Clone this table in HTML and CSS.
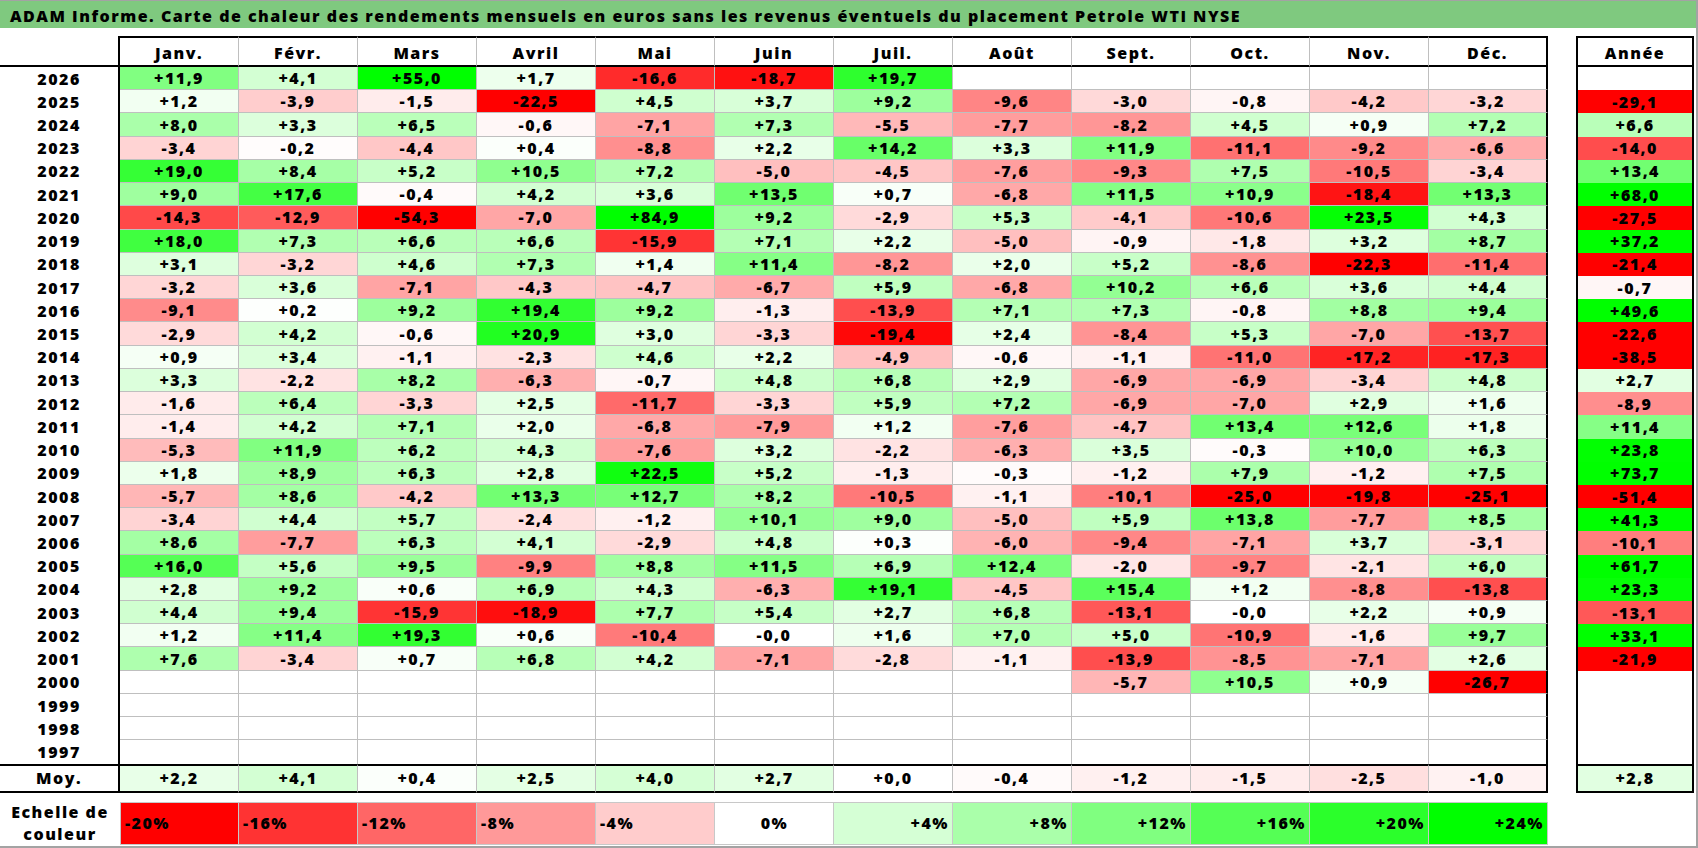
FILE: index.html
```html
<!DOCTYPE html>
<html lang="fr">
<head>
<meta charset="utf-8">
<title>ADAM Informe - Carte de chaleur Petrole WTI NYSE</title>
<link rel="stylesheet" href="styles.css">
</head>
<body>
<div class="frame">
  <div class="title">ADAM Informe. Carte de chaleur des rendements mensuels en euros sans les revenus éventuels du placement Petrole WTI NYSE</div>
  <div class="sheet">
    <div class="row head"><div class="lab"></div><div class="c">Janv.</div><div class="c">Févr.</div><div class="c">Mars</div><div class="c">Avril</div><div class="c">Mai</div><div class="c">Juin</div><div class="c">Juil.</div><div class="c">Août</div><div class="c">Sept.</div><div class="c">Oct.</div><div class="c">Nov.</div><div class="c">Déc.</div><div class="yr">Année</div></div>
    <div class="row"><div class="lab">2026</div><div class="c p" style="--c:129">+11,9</div><div class="c p" style="--c:211">+4,1</div><div class="c p" style="--c:0">+55,0</div><div class="c p" style="--c:237">+1,7</div><div class="c n" style="--c:43">-16,6</div><div class="c n" style="--c:17">-18,7</div><div class="c p" style="--c:46">+19,7</div><div class="c"></div><div class="c"></div><div class="c"></div><div class="c"></div><div class="c"></div><div class="yr"></div></div>
    <div class="row"><div class="lab">2025</div><div class="c p" style="--c:242">+1,2</div><div class="c n" style="--c:205">-3,9</div><div class="c n" style="--c:236">-1,5</div><div class="c n" style="--c:0">-22,5</div><div class="c p" style="--c:207">+4,5</div><div class="c p" style="--c:216">+3,7</div><div class="c p" style="--c:157">+9,2</div><div class="c n" style="--c:133">-9,6</div><div class="c n" style="--c:217">-3,0</div><div class="c n" style="--c:245">-0,8</div><div class="c n" style="--c:201">-4,2</div><div class="c n" style="--c:214">-3,2</div><div class="yr n" style="--c:0">-29,1</div></div>
    <div class="row"><div class="lab">2024</div><div class="c p" style="--c:170">+8,0</div><div class="c p" style="--c:220">+3,3</div><div class="c p" style="--c:186">+6,5</div><div class="c n" style="--c:247">-0,6</div><div class="c n" style="--c:164">-7,1</div><div class="c p" style="--c:177">+7,3</div><div class="c n" style="--c:185">-5,5</div><div class="c n" style="--c:157">-7,7</div><div class="c n" style="--c:150">-8,2</div><div class="c p" style="--c:207">+4,5</div><div class="c p" style="--c:245">+0,9</div><div class="c p" style="--c:179">+7,2</div><div class="yr p" style="--c:185">+6,6</div></div>
    <div class="row"><div class="lab">2023</div><div class="c n" style="--c:212">-3,4</div><div class="c n" style="--c:252">-0,2</div><div class="c n" style="--c:199">-4,4</div><div class="c p" style="--c:251">+0,4</div><div class="c n" style="--c:143">-8,8</div><div class="c p" style="--c:232">+2,2</div><div class="c p" style="--c:104">+14,2</div><div class="c p" style="--c:220">+3,3</div><div class="c p" style="--c:129">+11,9</div><div class="c n" style="--c:113">-11,1</div><div class="c n" style="--c:138">-9,2</div><div class="c n" style="--c:171">-6,6</div><div class="yr n" style="--c:77">-14,0</div></div>
    <div class="row"><div class="lab">2022</div><div class="c p" style="--c:53">+19,0</div><div class="c p" style="--c:166">+8,4</div><div class="c p" style="--c:200">+5,2</div><div class="c p" style="--c:143">+10,5</div><div class="c p" style="--c:179">+7,2</div><div class="c n" style="--c:191">-5,0</div><div class="c n" style="--c:198">-4,5</div><div class="c n" style="--c:158">-7,6</div><div class="c n" style="--c:136">-9,3</div><div class="c p" style="--c:175">+7,5</div><div class="c n" style="--c:121">-10,5</div><div class="c n" style="--c:212">-3,4</div><div class="yr p" style="--c:113">+13,4</div></div>
    <div class="row"><div class="lab">2021</div><div class="c p" style="--c:159">+9,0</div><div class="c p" style="--c:68">+17,6</div><div class="c n" style="--c:250">-0,4</div><div class="c p" style="--c:210">+4,2</div><div class="c p" style="--c:217">+3,6</div><div class="c p" style="--c:112">+13,5</div><div class="c p" style="--c:248">+0,7</div><div class="c n" style="--c:168">-6,8</div><div class="c p" style="--c:133">+11,5</div><div class="c p" style="--c:139">+10,9</div><div class="c n" style="--c:20">-18,4</div><div class="c p" style="--c:114">+13,3</div><div class="yr p" style="--c:0">+68,0</div></div>
    <div class="row"><div class="lab">2020</div><div class="c n" style="--c:73">-14,3</div><div class="c n" style="--c:91">-12,9</div><div class="c n" style="--c:0">-54,3</div><div class="c n" style="--c:166">-7,0</div><div class="c p" style="--c:0">+84,9</div><div class="c p" style="--c:157">+9,2</div><div class="c n" style="--c:218">-2,9</div><div class="c p" style="--c:199">+5,3</div><div class="c n" style="--c:203">-4,1</div><div class="c n" style="--c:120">-10,6</div><div class="c p" style="--c:5">+23,5</div><div class="c p" style="--c:209">+4,3</div><div class="yr n" style="--c:0">-27,5</div></div>
    <div class="row"><div class="lab">2019</div><div class="c p" style="--c:64">+18,0</div><div class="c p" style="--c:177">+7,3</div><div class="c p" style="--c:185">+6,6</div><div class="c p" style="--c:185">+6,6</div><div class="c n" style="--c:52">-15,9</div><div class="c p" style="--c:180">+7,1</div><div class="c p" style="--c:232">+2,2</div><div class="c n" style="--c:191">-5,0</div><div class="c n" style="--c:244">-0,9</div><div class="c n" style="--c:232">-1,8</div><div class="c p" style="--c:221">+3,2</div><div class="c p" style="--c:163">+8,7</div><div class="yr p" style="--c:0">+37,2</div></div>
    <div class="row"><div class="lab">2018</div><div class="c p" style="--c:222">+3,1</div><div class="c n" style="--c:214">-3,2</div><div class="c p" style="--c:206">+4,6</div><div class="c p" style="--c:177">+7,3</div><div class="c p" style="--c:240">+1,4</div><div class="c p" style="--c:134">+11,4</div><div class="c n" style="--c:150">-8,2</div><div class="c p" style="--c:234">+2,0</div><div class="c p" style="--c:200">+5,2</div><div class="c n" style="--c:145">-8,6</div><div class="c n" style="--c:0">-22,3</div><div class="c n" style="--c:110">-11,4</div><div class="yr n" style="--c:0">-21,4</div></div>
    <div class="row"><div class="lab">2017</div><div class="c n" style="--c:214">-3,2</div><div class="c p" style="--c:217">+3,6</div><div class="c n" style="--c:164">-7,1</div><div class="c n" style="--c:200">-4,3</div><div class="c n" style="--c:195">-4,7</div><div class="c n" style="--c:170">-6,7</div><div class="c p" style="--c:192">+5,9</div><div class="c n" style="--c:168">-6,8</div><div class="c p" style="--c:147">+10,2</div><div class="c p" style="--c:185">+6,6</div><div class="c p" style="--c:217">+3,6</div><div class="c p" style="--c:208">+4,4</div><div class="yr n" style="--c:246">-0,7</div></div>
    <div class="row"><div class="lab">2016</div><div class="c n" style="--c:139">-9,1</div><div class="c p" style="--c:253">+0,2</div><div class="c p" style="--c:157">+9,2</div><div class="c p" style="--c:49">+19,4</div><div class="c p" style="--c:157">+9,2</div><div class="c n" style="--c:238">-1,3</div><div class="c n" style="--c:78">-13,9</div><div class="c p" style="--c:180">+7,1</div><div class="c p" style="--c:177">+7,3</div><div class="c n" style="--c:245">-0,8</div><div class="c p" style="--c:162">+8,8</div><div class="c p" style="--c:155">+9,4</div><div class="yr p" style="--c:0">+49,6</div></div>
    <div class="row"><div class="lab">2015</div><div class="c n" style="--c:218">-2,9</div><div class="c p" style="--c:210">+4,2</div><div class="c n" style="--c:247">-0,6</div><div class="c p" style="--c:33">+20,9</div><div class="c p" style="--c:223">+3,0</div><div class="c n" style="--c:213">-3,3</div><div class="c n" style="--c:8">-19,4</div><div class="c p" style="--c:230">+2,4</div><div class="c n" style="--c:148">-8,4</div><div class="c p" style="--c:199">+5,3</div><div class="c n" style="--c:166">-7,0</div><div class="c n" style="--c:80">-13,7</div><div class="yr n" style="--c:0">-22,6</div></div>
    <div class="row"><div class="lab">2014</div><div class="c p" style="--c:245">+0,9</div><div class="c p" style="--c:219">+3,4</div><div class="c n" style="--c:241">-1,1</div><div class="c n" style="--c:226">-2,3</div><div class="c p" style="--c:206">+4,6</div><div class="c p" style="--c:232">+2,2</div><div class="c n" style="--c:193">-4,9</div><div class="c n" style="--c:247">-0,6</div><div class="c n" style="--c:241">-1,1</div><div class="c n" style="--c:115">-11,0</div><div class="c n" style="--c:36">-17,2</div><div class="c n" style="--c:34">-17,3</div><div class="yr n" style="--c:0">-38,5</div></div>
    <div class="row"><div class="lab">2013</div><div class="c p" style="--c:220">+3,3</div><div class="c n" style="--c:227">-2,2</div><div class="c p" style="--c:168">+8,2</div><div class="c n" style="--c:175">-6,3</div><div class="c n" style="--c:246">-0,7</div><div class="c p" style="--c:204">+4,8</div><div class="c p" style="--c:183">+6,8</div><div class="c p" style="--c:224">+2,9</div><div class="c n" style="--c:167">-6,9</div><div class="c n" style="--c:167">-6,9</div><div class="c n" style="--c:212">-3,4</div><div class="c p" style="--c:204">+4,8</div><div class="yr p" style="--c:226">+2,7</div></div>
    <div class="row"><div class="lab">2012</div><div class="c n" style="--c:235">-1,6</div><div class="c p" style="--c:187">+6,4</div><div class="c n" style="--c:213">-3,3</div><div class="c p" style="--c:228">+2,5</div><div class="c n" style="--c:106">-11,7</div><div class="c n" style="--c:213">-3,3</div><div class="c p" style="--c:192">+5,9</div><div class="c p" style="--c:179">+7,2</div><div class="c n" style="--c:167">-6,9</div><div class="c n" style="--c:166">-7,0</div><div class="c p" style="--c:224">+2,9</div><div class="c p" style="--c:238">+1,6</div><div class="yr n" style="--c:142">-8,9</div></div>
    <div class="row"><div class="lab">2011</div><div class="c n" style="--c:237">-1,4</div><div class="c p" style="--c:210">+4,2</div><div class="c p" style="--c:180">+7,1</div><div class="c p" style="--c:234">+2,0</div><div class="c n" style="--c:168">-6,8</div><div class="c n" style="--c:154">-7,9</div><div class="c p" style="--c:242">+1,2</div><div class="c n" style="--c:158">-7,6</div><div class="c n" style="--c:195">-4,7</div><div class="c p" style="--c:113">+13,4</div><div class="c p" style="--c:121">+12,6</div><div class="c p" style="--c:236">+1,8</div><div class="yr p" style="--c:134">+11,4</div></div>
    <div class="row"><div class="lab">2010</div><div class="c n" style="--c:187">-5,3</div><div class="c p" style="--c:129">+11,9</div><div class="c p" style="--c:189">+6,2</div><div class="c p" style="--c:209">+4,3</div><div class="c n" style="--c:158">-7,6</div><div class="c p" style="--c:221">+3,2</div><div class="c n" style="--c:227">-2,2</div><div class="c n" style="--c:175">-6,3</div><div class="c p" style="--c:218">+3,5</div><div class="c n" style="--c:251">-0,3</div><div class="c p" style="--c:149">+10,0</div><div class="c p" style="--c:188">+6,3</div><div class="yr p" style="--c:2">+23,8</div></div>
    <div class="row"><div class="lab">2009</div><div class="c p" style="--c:236">+1,8</div><div class="c p" style="--c:160">+8,9</div><div class="c p" style="--c:188">+6,3</div><div class="c p" style="--c:225">+2,8</div><div class="c p" style="--c:16">+22,5</div><div class="c p" style="--c:200">+5,2</div><div class="c n" style="--c:238">-1,3</div><div class="c n" style="--c:251">-0,3</div><div class="c n" style="--c:240">-1,2</div><div class="c p" style="--c:171">+7,9</div><div class="c n" style="--c:240">-1,2</div><div class="c p" style="--c:175">+7,5</div><div class="yr p" style="--c:0">+73,7</div></div>
    <div class="row"><div class="lab">2008</div><div class="c n" style="--c:182">-5,7</div><div class="c p" style="--c:164">+8,6</div><div class="c n" style="--c:201">-4,2</div><div class="c p" style="--c:114">+13,3</div><div class="c p" style="--c:120">+12,7</div><div class="c p" style="--c:168">+8,2</div><div class="c n" style="--c:121">-10,5</div><div class="c n" style="--c:241">-1,1</div><div class="c n" style="--c:126">-10,1</div><div class="c n" style="--c:0">-25,0</div><div class="c n" style="--c:3">-19,8</div><div class="c n" style="--c:0">-25,1</div><div class="yr n" style="--c:0">-51,4</div></div>
    <div class="row"><div class="lab">2007</div><div class="c n" style="--c:212">-3,4</div><div class="c p" style="--c:208">+4,4</div><div class="c p" style="--c:194">+5,7</div><div class="c n" style="--c:224">-2,4</div><div class="c n" style="--c:240">-1,2</div><div class="c p" style="--c:148">+10,1</div><div class="c p" style="--c:159">+9,0</div><div class="c n" style="--c:191">-5,0</div><div class="c p" style="--c:192">+5,9</div><div class="c p" style="--c:108">+13,8</div><div class="c n" style="--c:157">-7,7</div><div class="c p" style="--c:165">+8,5</div><div class="yr p" style="--c:0">+41,3</div></div>
    <div class="row"><div class="lab">2006</div><div class="c p" style="--c:164">+8,6</div><div class="c n" style="--c:157">-7,7</div><div class="c p" style="--c:188">+6,3</div><div class="c p" style="--c:211">+4,1</div><div class="c n" style="--c:218">-2,9</div><div class="c p" style="--c:204">+4,8</div><div class="c p" style="--c:252">+0,3</div><div class="c n" style="--c:179">-6,0</div><div class="c n" style="--c:135">-9,4</div><div class="c n" style="--c:164">-7,1</div><div class="c p" style="--c:216">+3,7</div><div class="c n" style="--c:215">-3,1</div><div class="yr n" style="--c:126">-10,1</div></div>
    <div class="row"><div class="lab">2005</div><div class="c p" style="--c:85">+16,0</div><div class="c p" style="--c:196">+5,6</div><div class="c p" style="--c:154">+9,5</div><div class="c n" style="--c:129">-9,9</div><div class="c p" style="--c:162">+8,8</div><div class="c p" style="--c:133">+11,5</div><div class="c p" style="--c:182">+6,9</div><div class="c p" style="--c:123">+12,4</div><div class="c n" style="--c:230">-2,0</div><div class="c n" style="--c:131">-9,7</div><div class="c n" style="--c:228">-2,1</div><div class="c p" style="--c:191">+6,0</div><div class="yr p" style="--c:0">+61,7</div></div>
    <div class="row"><div class="lab">2004</div><div class="c p" style="--c:225">+2,8</div><div class="c p" style="--c:157">+9,2</div><div class="c p" style="--c:249">+0,6</div><div class="c p" style="--c:182">+6,9</div><div class="c p" style="--c:209">+4,3</div><div class="c n" style="--c:175">-6,3</div><div class="c p" style="--c:52">+19,1</div><div class="c n" style="--c:198">-4,5</div><div class="c p" style="--c:91">+15,4</div><div class="c p" style="--c:242">+1,2</div><div class="c n" style="--c:143">-8,8</div><div class="c n" style="--c:79">-13,8</div><div class="yr p" style="--c:7">+23,3</div></div>
    <div class="row"><div class="lab">2003</div><div class="c p" style="--c:208">+4,4</div><div class="c p" style="--c:155">+9,4</div><div class="c n" style="--c:52">-15,9</div><div class="c n" style="--c:14">-18,9</div><div class="c p" style="--c:173">+7,7</div><div class="c p" style="--c:198">+5,4</div><div class="c p" style="--c:226">+2,7</div><div class="c p" style="--c:183">+6,8</div><div class="c n" style="--c:88">-13,1</div><div class="c">-0,0</div><div class="c p" style="--c:232">+2,2</div><div class="c p" style="--c:245">+0,9</div><div class="yr n" style="--c:88">-13,1</div></div>
    <div class="row"><div class="lab">2002</div><div class="c p" style="--c:242">+1,2</div><div class="c p" style="--c:134">+11,4</div><div class="c p" style="--c:50">+19,3</div><div class="c p" style="--c:249">+0,6</div><div class="c n" style="--c:122">-10,4</div><div class="c">-0,0</div><div class="c p" style="--c:238">+1,6</div><div class="c p" style="--c:181">+7,0</div><div class="c p" style="--c:202">+5,0</div><div class="c n" style="--c:116">-10,9</div><div class="c n" style="--c:235">-1,6</div><div class="c p" style="--c:152">+9,7</div><div class="yr p" style="--c:0">+33,1</div></div>
    <div class="row"><div class="lab">2001</div><div class="c p" style="--c:174">+7,6</div><div class="c n" style="--c:212">-3,4</div><div class="c p" style="--c:248">+0,7</div><div class="c p" style="--c:183">+6,8</div><div class="c p" style="--c:210">+4,2</div><div class="c n" style="--c:164">-7,1</div><div class="c n" style="--c:219">-2,8</div><div class="c n" style="--c:241">-1,1</div><div class="c n" style="--c:78">-13,9</div><div class="c n" style="--c:147">-8,5</div><div class="c n" style="--c:164">-7,1</div><div class="c p" style="--c:227">+2,6</div><div class="yr n" style="--c:0">-21,9</div></div>
    <div class="row"><div class="lab">2000</div><div class="c"></div><div class="c"></div><div class="c"></div><div class="c"></div><div class="c"></div><div class="c"></div><div class="c"></div><div class="c"></div><div class="c n" style="--c:182">-5,7</div><div class="c p" style="--c:143">+10,5</div><div class="c p" style="--c:245">+0,9</div><div class="c n" style="--c:0">-26,7</div><div class="yr"></div></div>
    <div class="row"><div class="lab">1999</div><div class="c"></div><div class="c"></div><div class="c"></div><div class="c"></div><div class="c"></div><div class="c"></div><div class="c"></div><div class="c"></div><div class="c"></div><div class="c"></div><div class="c"></div><div class="c"></div><div class="yr"></div></div>
    <div class="row"><div class="lab">1998</div><div class="c"></div><div class="c"></div><div class="c"></div><div class="c"></div><div class="c"></div><div class="c"></div><div class="c"></div><div class="c"></div><div class="c"></div><div class="c"></div><div class="c"></div><div class="c"></div><div class="yr"></div></div>
    <div class="row last"><div class="lab">1997</div><div class="c"></div><div class="c"></div><div class="c"></div><div class="c"></div><div class="c"></div><div class="c"></div><div class="c"></div><div class="c"></div><div class="c"></div><div class="c"></div><div class="c"></div><div class="c"></div><div class="yr"></div></div>
    <div class="row moy"><div class="lab">Moy.</div><div class="c p" style="--c:232">+2,2</div><div class="c p" style="--c:211">+4,1</div><div class="c p" style="--c:251">+0,4</div><div class="c p" style="--c:228">+2,5</div><div class="c p" style="--c:213">+4,0</div><div class="c p" style="--c:226">+2,7</div><div class="c">+0,0</div><div class="c n" style="--c:250">-0,4</div><div class="c n" style="--c:240">-1,2</div><div class="c n" style="--c:236">-1,5</div><div class="c n" style="--c:223">-2,5</div><div class="c n" style="--c:242">-1,0</div><div class="yr p" style="--c:225">+2,8</div></div>
  </div>
  <div class="scale">
    <div class="scale-lab">Echelle de<br>couleur</div>
    <div class="sw n neg" style="--c:0">-20%</div>
    <div class="sw n neg" style="--c:51">-16%</div>
    <div class="sw n neg" style="--c:102">-12%</div>
    <div class="sw n neg" style="--c:153">-8%</div>
    <div class="sw n neg" style="--c:204">-4%</div>
    <div class="sw zero">0%</div>
    <div class="sw p pos" style="--c:213">+4%</div>
    <div class="sw p pos" style="--c:170">+8%</div>
    <div class="sw p pos" style="--c:128">+12%</div>
    <div class="sw p pos" style="--c:85">+16%</div>
    <div class="sw p pos" style="--c:43">+20%</div>
    <div class="sw p pos" style="--c:0">+24%</div>
  </div>
</div>
</body>
</html>
```

FILE: styles.css
```css
* { box-sizing: border-box; }
html, body { margin: 0; padding: 0; background: #fff; }
body {
  font-family: "Open Sans", "Liberation Sans", sans-serif;
  font-weight: 800;
  font-size: 16px;
  letter-spacing: 1.5px;
  color: #000;
}
.frame {
  width: 1698px;
  height: 848px;
  border-top: 1px solid #a3a3a3;
  border-right: 2px solid #a3a3a3;
  border-bottom: 2px solid #a3a3a3;
  overflow: hidden;
}
.title {
  height: 27px;
  background: #7fc97f;
  padding: 3px 0 0 10px;
  line-height: 24px;
  letter-spacing: 1.5px;
  white-space: nowrap;
}
.sheet {
  display: grid;
  grid-template-columns: 120px repeat(12, 119px) 28px 118px;
  grid-template-rows: 31px repeat(30, 23.233px) 29px;
  margin-top: 8px;
}
.row { display: contents; }
.row > div {
  display: flex;
  align-items: center;
  justify-content: center;
  white-space: nowrap;
}
.lab { border-right: 2px solid #000; }
.c {
  border-right: 1px solid #bfbfbf;
  border-bottom: 1px solid #bfbfbf;
}
.row > .c:nth-child(13) { border-right: 2px solid #000; }
.yr {
  grid-column: 15;
  border-left: 2px solid #000;
  border-right: 2px solid #000;
}
.head > div {
  border-top: 2px solid #000;
  border-bottom: 2px solid #000;
  padding-top: 3px;
}
.head > .lab { border-top: none; }
.last > .c { border-bottom: none; }
.moy > div {
  border-top: 2px solid #000;
  border-bottom: 2px solid #000;
}
.p { background: rgb(var(--c), 255, var(--c)); }
.n { background: rgb(255, var(--c), var(--c)); }
.scale {
  display: flex;
  margin-top: 9px;
  height: 43px;
}
.scale-lab {
  width: 120px;
  flex: none;
  text-align: center;
  line-height: 22px;
  display: flex;
  align-items: center;
  justify-content: center;
}
.sw {
  width: 119px;
  flex: none;
  display: flex;
  align-items: center;
  padding: 0 3px 0 4px;
  border: 1px solid #c8c8c8;
  border-left: none;
}
.scale-lab + .sw { border-left: 1px solid #c8c8c8; }
.neg { justify-content: flex-start; }
.zero { justify-content: center; }
.pos { justify-content: flex-end; }
```
